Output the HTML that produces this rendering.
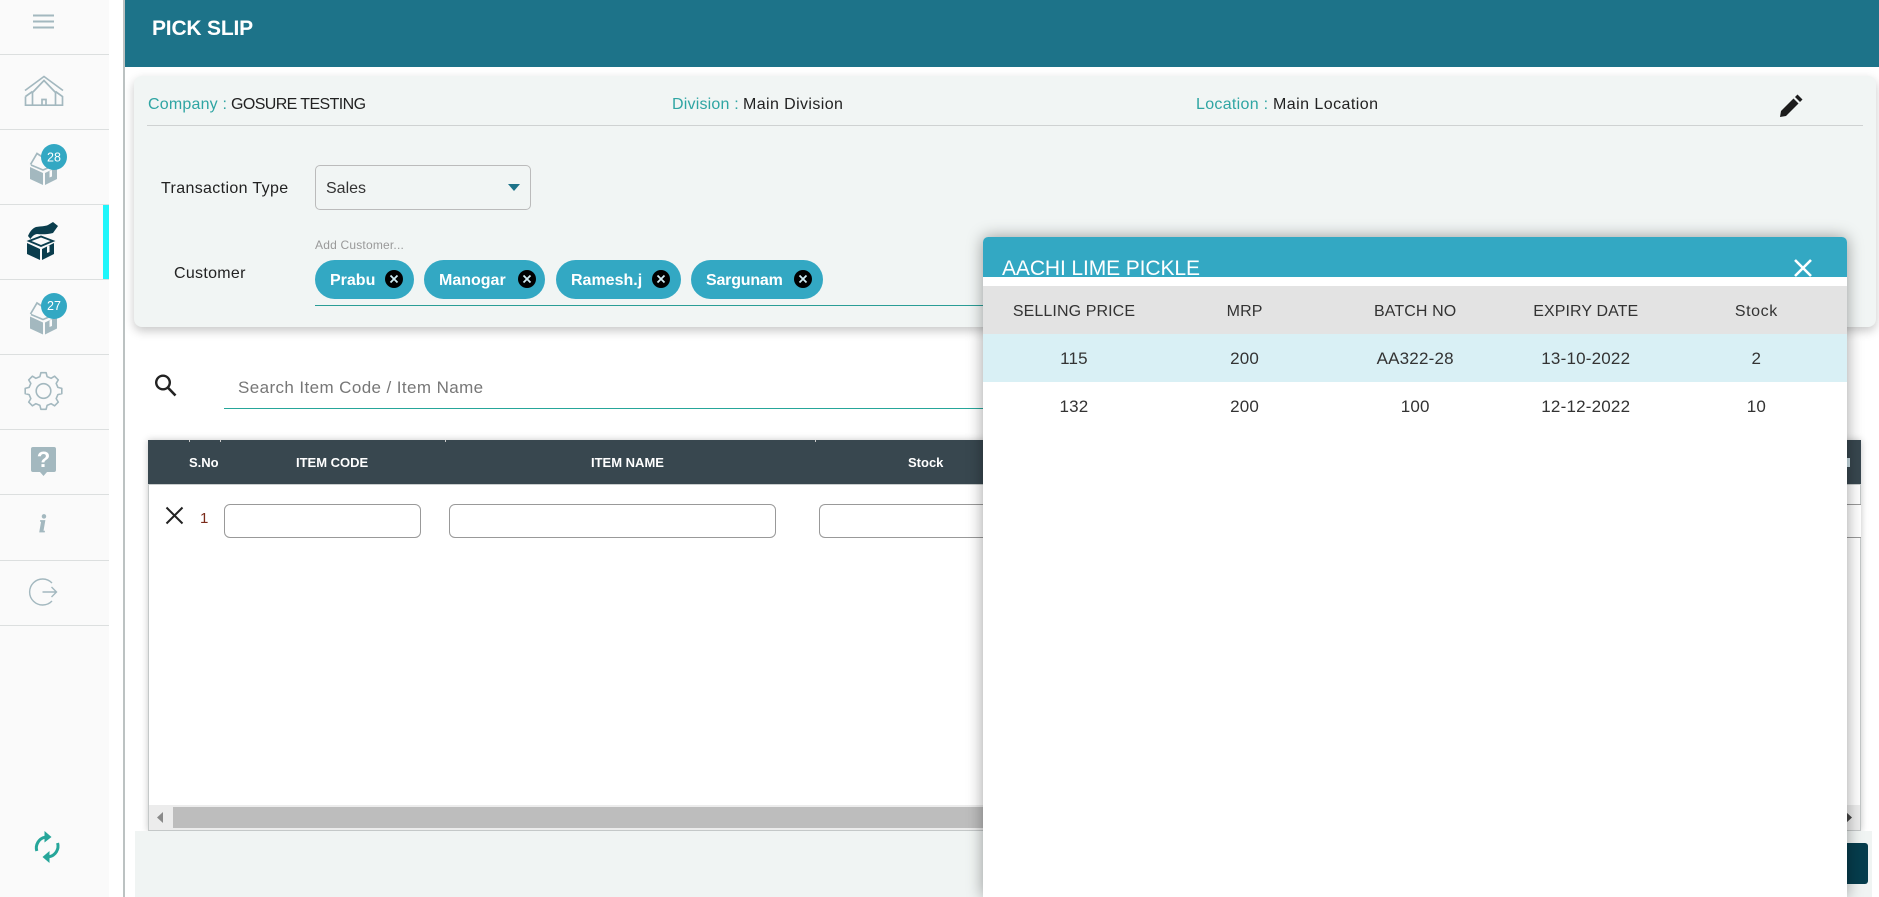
<!DOCTYPE html>
<html lang="en">
<head>
<meta charset="utf-8">
<title>Pick Slip</title>
<style>
*{box-sizing:border-box}
html,body{margin:0;padding:0;width:1879px;height:897px;overflow:hidden;background:#fff;font-family:"Liberation Sans",Arial,sans-serif;color:#222}
.a{position:absolute}
.t{position:absolute;white-space:nowrap;line-height:20px;font-size:16px}
.side{left:0;top:0;width:109px;height:897px;background:#fafafa}
.sep{position:absolute;left:0;width:109px;height:1px;background:#dcdfdf}
.vline{left:123px;top:0;width:2px;height:897px;background:#bcc2c2}
.top{left:125px;top:0;width:1754px;height:67px;background:#1d7389}
.card{left:134px;top:76px;width:1742px;height:251px;background:#f1f5f4;border-radius:8px;box-shadow:0 4px 10px rgba(0,0,0,.22)}
.lab{color:#2fa5a3}
.chip{position:absolute;top:260px;height:39px;border-radius:20px;background:#33a8c3;color:#fff;font-weight:bold;font-size:16px;line-height:41px;padding-left:15px}
.chip svg{position:absolute;top:10px}
.input{position:absolute;top:504px;height:34px;border:1px solid #999;border-radius:6px;background:#fff}
.tbl{left:148px;top:440px;width:1713px;height:391px;background:#fff;border:1px solid #c4c8c8;box-shadow:0 0 7px rgba(0,0,0,.22)}
.thead{left:148px;top:440px;width:1713px;height:45px;background:#38474f;border-bottom:1px solid #c9cdcd}
.th{position:absolute;top:453px;line-height:20px;font-size:13px;font-weight:bold;color:#fff;white-space:nowrap}
.foot{left:135px;top:831px;width:1737px;height:66px;background:#f0f4f3}
.modal{left:983px;top:237px;width:864px;height:660px;background:#fff;border-radius:5px 5px 0 0;box-shadow:0 0 16px rgba(0,0,0,.38)}
.mhead{position:absolute;left:0;top:0;width:864px;height:40px;background:#33a8c3;border-radius:5px 5px 0 0}
.row{position:absolute;left:0;width:864px;height:48px;padding-left:5.7px;display:flex;font-size:17px;line-height:50px;color:#333}
.row div{width:170.6px;text-align:center;letter-spacing:.2px}
.row.h{background:#e3e3e3;font-size:16px;top:49px;line-height:51px}
.row.h div{letter-spacing:.1px}
</style>
</head>
<body>

<div class="a side"></div>
<div class="sep" style="top:54px"></div>
<div class="sep" style="top:129px"></div>
<div class="sep" style="top:204px"></div>
<div class="sep" style="top:279px"></div>
<div class="sep" style="top:354px"></div>
<div class="sep" style="top:429px"></div>
<div class="sep" style="top:494px"></div>
<div class="sep" style="top:560px"></div>
<div class="sep" style="top:625px"></div>
<div class="a" style="left:103px;top:205px;width:6px;height:74px;background:#1ff6fb"></div>

<svg class="a" style="left:0;top:0" width="109" height="897" viewBox="0 0 109 897" fill="none">
  <!-- menu -->
  <path d="M33 15.5H54M33 21.5H54M33 27.5H54" stroke="#a3b8bf" stroke-width="2"/>
  <!-- home -->
  <path d="M25 90.5L44 76.5L63 90.5" stroke="#a3b8bf" stroke-width="1.7"/>
  <path d="M32.5 92.5L44 80.5L55.5 92.5M32.5 92V105M55.5 92V105M25.5 96.5V105.2H62.5V96.5L55.5 91.5M25.5 96.5L32.5 91.5M42 105V99.5H46V105" stroke="#a3b8bf" stroke-width="1.7"/>
  <!-- box 28 -->
  <g id="bx">
    <path d="M30 167L43 173V185L30 179Z" fill="#a3b8bf"/>
    <path d="M45 173L57 167V179L45 185Z" fill="#a3b8bf"/>
    <path d="M49.5 171V177.5L52 176.5V170Z" fill="#fafafa"/>
    <path d="M30.5 164.5L37 153.5L44 158M31 165L43 170L55 165" stroke="#a3b8bf" stroke-width="1.7"/>
  </g>
  <circle cx="54" cy="157" r="13" fill="#33a8c3"/>
  <text x="54" y="161.5" text-anchor="middle" font-family="Liberation Sans, sans-serif" font-size="12.5" fill="#fff">28</text>
  <!-- active -->
  <path d="M27 243L40 249V260L27 254Z" fill="#0a3d4d"/>
  <path d="M42 249L54 243V254L42 260Z" fill="#0a3d4d"/>
  <path d="M47 246.5V253L49.5 252V245.5Z" fill="#fafafa"/>
  <path d="M28 236C30 231 33 228 36 227C41 226 45 226.5 48 225L53 222L58 226L53 233C47 234.5 42 234.5 37 234C34 234.5 32 236.5 30.5 239Z" fill="#0a3d4d"/>
  <path d="M29 241L41 236.5L53 241L41 246Z" fill="none" stroke="#0a3d4d" stroke-width="1.8"/>
  <!-- box 27 -->
  <use href="#bx" y="149.5"/>
  <circle cx="54" cy="306" r="13" fill="#33a8c3"/>
  <text x="54" y="310" text-anchor="middle" font-family="Liberation Sans, sans-serif" font-size="12.5" fill="#fff">27</text>
  <!-- gear -->
  <g transform="translate(43.5 391)" stroke="#a3b8bf" stroke-width="1.6" stroke-linejoin="round">
    <path d="M18.3 2.6L14.4 3.6L12.7 7.6L14.8 11.1L11.1 14.8L7.6 12.7L3.6 14.4L2.6 18.3L-2.6 18.3L-3.6 14.4L-7.6 12.7L-11.1 14.8L-14.8 11.1L-12.7 7.6L-14.4 3.6L-18.3 2.6L-18.3 -2.6L-14.4 -3.6L-12.7 -7.6L-14.8 -11.1L-11.1 -14.8L-7.6 -12.7L-3.6 -14.4L-2.6 -18.3L2.6 -18.3L3.6 -14.4L7.6 -12.7L11.1 -14.8L14.8 -11.1L12.7 -7.6L14.4 -3.6L18.3 -2.6Z"/>
    <circle r="7.3"/>
  </g>
  <!-- help -->
  <path d="M33 447H54A2 2 0 0 1 56 449V470A2 2 0 0 1 54 472H47L43.5 476L40 472H33A2 2 0 0 1 31 470V449A2 2 0 0 1 33 447Z" fill="#a3b8bf"/>
  <text x="43.5" y="467" text-anchor="middle" font-family="Liberation Sans, sans-serif" font-weight="bold" font-size="22" fill="#fff">?</text>
  <!-- info -->
  <text x="42.5" y="532" text-anchor="middle" font-family="Liberation Serif, serif" font-style="italic" font-weight="bold" font-size="25" fill="#a3b8bf" stroke="#a3b8bf" stroke-width=".7">i</text>
  <!-- logout -->
  <path d="M52 583A13 13 0 1 0 52 601" stroke="#a3b8bf" stroke-width="1.4"/>
  <path d="M42.5 592H56.5M51.5 587L56.5 592L51.5 597" stroke="#a3b8bf" stroke-width="1.4"/>
  <!-- refresh -->
  <path d="M36.8 851A11 11 0 0 1 45 837.2" stroke="#26a69a" stroke-width="3"/>
  <path d="M44.5 831L51.5 837L44.5 842.5Z" fill="#26a69a"/>
  <path d="M57.6 843A11 11 0 0 1 49 856.8" stroke="#26a69a" stroke-width="3"/>
  <path d="M49.5 851L42.5 857L49.5 863Z" fill="#26a69a"/>
</svg>

<div class="a vline"></div>
<div class="a top"></div>
<div class="t" style="left:152px;top:18px;font-size:21px;font-weight:bold;color:#fff;line-height:21px;letter-spacing:-.2px">PICK SLIP</div>

<div class="a card"></div>
<div class="t lab" style="left:148px;top:95px;letter-spacing:.2px">Company :</div>
<div class="t" style="left:231px;top:95px;letter-spacing:-.6px">GOSURE TESTING</div>
<div class="t lab" style="left:672px;top:95px;letter-spacing:.2px">Division :</div>
<div class="t" style="left:743px;top:95px;letter-spacing:.4px">Main Division</div>
<div class="t lab" style="left:1196px;top:95px;letter-spacing:.3px">Location :</div>
<div class="t" style="left:1273px;top:95px;letter-spacing:.45px">Main Location</div>
<svg class="a" style="left:1778px;top:92px" width="26" height="26" viewBox="0 0 26 26"><path d="M2 25L3 19L15.5 6.5L20.5 11.5L8 24Z" fill="#1c1c1c"/><path d="M17 5L19.5 2.5L24.5 7.5L22 10Z" fill="#1c1c1c"/></svg>
<div class="a" style="left:147px;top:125px;width:1716px;height:1px;background:#cfd2d2"></div>

<div class="t" style="left:161px;top:179px;letter-spacing:.35px">Transaction Type</div>
<div class="a" style="left:315px;top:165px;width:216px;height:45px;border:1px solid #bbb;border-radius:5px"></div>
<div class="t" style="left:326px;top:179px;color:#333">Sales</div>
<svg class="a" style="left:508px;top:184px" width="12" height="7"><path d="M0 0H12L6 7Z" fill="#1d7389"/></svg>
<div class="t" style="left:315px;top:235px;font-size:12px;color:#999;letter-spacing:.2px">Add Customer...</div>
<div class="t" style="left:174px;top:264px;letter-spacing:.3px">Customer</div>

<div class="chip" style="left:315px;width:99px">Prabu<svg style="left:70px" width="18" height="18"><circle cx="9" cy="9" r="9" fill="#000"/><path d="M5.5 5.5L12.5 12.5M12.5 5.5L5.5 12.5" stroke="#cfeaf1" stroke-width="1.8"/></svg></div>
<div class="chip" style="left:424px;width:121px">Manogar<svg style="left:93.5px" width="18" height="18"><circle cx="9" cy="9" r="9" fill="#000"/><path d="M5.5 5.5L12.5 12.5M12.5 5.5L5.5 12.5" stroke="#cfeaf1" stroke-width="1.8"/></svg></div>
<div class="chip" style="left:556px;width:125px">Ramesh.j<svg style="left:96px" width="18" height="18"><circle cx="9" cy="9" r="9" fill="#000"/><path d="M5.5 5.5L12.5 12.5M12.5 5.5L5.5 12.5" stroke="#cfeaf1" stroke-width="1.8"/></svg></div>
<div class="chip" style="left:691px;width:132px;letter-spacing:-.2px">Sargunam<svg style="left:103px" width="18" height="18"><circle cx="9" cy="9" r="9" fill="#000"/><path d="M5.5 5.5L12.5 12.5M12.5 5.5L5.5 12.5" stroke="#cfeaf1" stroke-width="1.8"/></svg></div>
<div class="a" style="left:315px;top:305px;width:680px;height:1px;background:#2a9d96"></div>

<svg class="a" style="left:154px;top:374px" width="24" height="24" fill="none"><circle cx="9" cy="8.5" r="6.8" stroke="#222" stroke-width="2.4"/><path d="M13.8 13.5L21.5 21.5" stroke="#222" stroke-width="2.6"/></svg>
<div class="t" style="left:238px;top:378px;font-size:17px;color:#777;letter-spacing:.4px">Search Item Code / Item Name</div>
<div class="a" style="left:224px;top:408px;width:770px;height:1px;background:#26a69a"></div>

<div class="a tbl"></div>
<div class="a thead"></div>
<div class="a" style="left:189px;top:440px;width:1px;height:2px;background:#ccc"></div>
<div class="a" style="left:220px;top:440px;width:1px;height:2px;background:#ccc"></div>
<div class="a" style="left:445px;top:440px;width:1px;height:2px;background:#ccc"></div>
<div class="a" style="left:815px;top:440px;width:1px;height:2px;background:#ccc"></div>
<div class="th" style="left:189px">S.No</div>
<div class="th" style="left:296px">ITEM CODE</div>
<div class="th" style="left:591px">ITEM NAME</div>
<div class="th" style="left:908px">Stock</div>
<div class="a" style="left:1847px;top:458px;width:3px;height:9px;background:#cfe3ea"></div>

<svg class="a" style="left:165px;top:506px" width="19" height="19" fill="none"><path d="M1.5 1.5L17.5 17.5M17.5 1.5L1.5 17.5" stroke="#222" stroke-width="2"/></svg>
<div class="t" style="left:200px;top:509px;font-size:15px;color:#7a2a1a">1</div>
<div class="input" style="left:224px;width:197px"></div>
<div class="input" style="left:449px;width:327px"></div>
<div class="input" style="left:819px;width:1042px;border-radius:6px 0 0 6px;border-right:0"></div>

<div class="a" style="left:149px;top:805px;width:1711px;height:25px;background:#ececec"></div>
<div class="a" style="left:173px;top:807px;width:1000px;height:21px;background:#bdbdbd"></div>
<svg class="a" style="left:157px;top:812px" width="6" height="11"><path d="M6 0V11L0 5.5Z" fill="#8a8a8a"/></svg>
<svg class="a" style="left:1846px;top:812px" width="8" height="11"><path d="M0 0V11L6 5.5Z" fill="#444"/></svg>

<div class="a foot"></div>
<div class="a" style="left:1760px;top:843px;width:108px;height:41px;background:#063d4d;border-radius:3px"></div>

<div class="a modal">
  <div class="mhead"></div>
  <div class="t" style="left:19px;top:21px;font-size:21px;line-height:22px;color:#fff;letter-spacing:-.1px">AACHI LIME PICKLE</div>
  <svg class="a" style="left:811px;top:22px" width="18" height="18" fill="none"><path d="M1 1L17 17M17 1L1 17" stroke="#fff" stroke-width="2.6"/></svg>
  <div class="row h"><div>SELLING PRICE</div><div>MRP</div><div>BATCH NO</div><div>EXPIRY DATE</div><div style="letter-spacing:.6px">Stock</div></div>
  <div class="row" style="top:97px;background:#d9f0f5"><div>115</div><div>200</div><div>AA322-28</div><div>13-10-2022</div><div>2</div></div>
  <div class="row" style="top:145px"><div>132</div><div>200</div><div>100</div><div>12-12-2022</div><div>10</div></div>
</div>

</body>
</html>
